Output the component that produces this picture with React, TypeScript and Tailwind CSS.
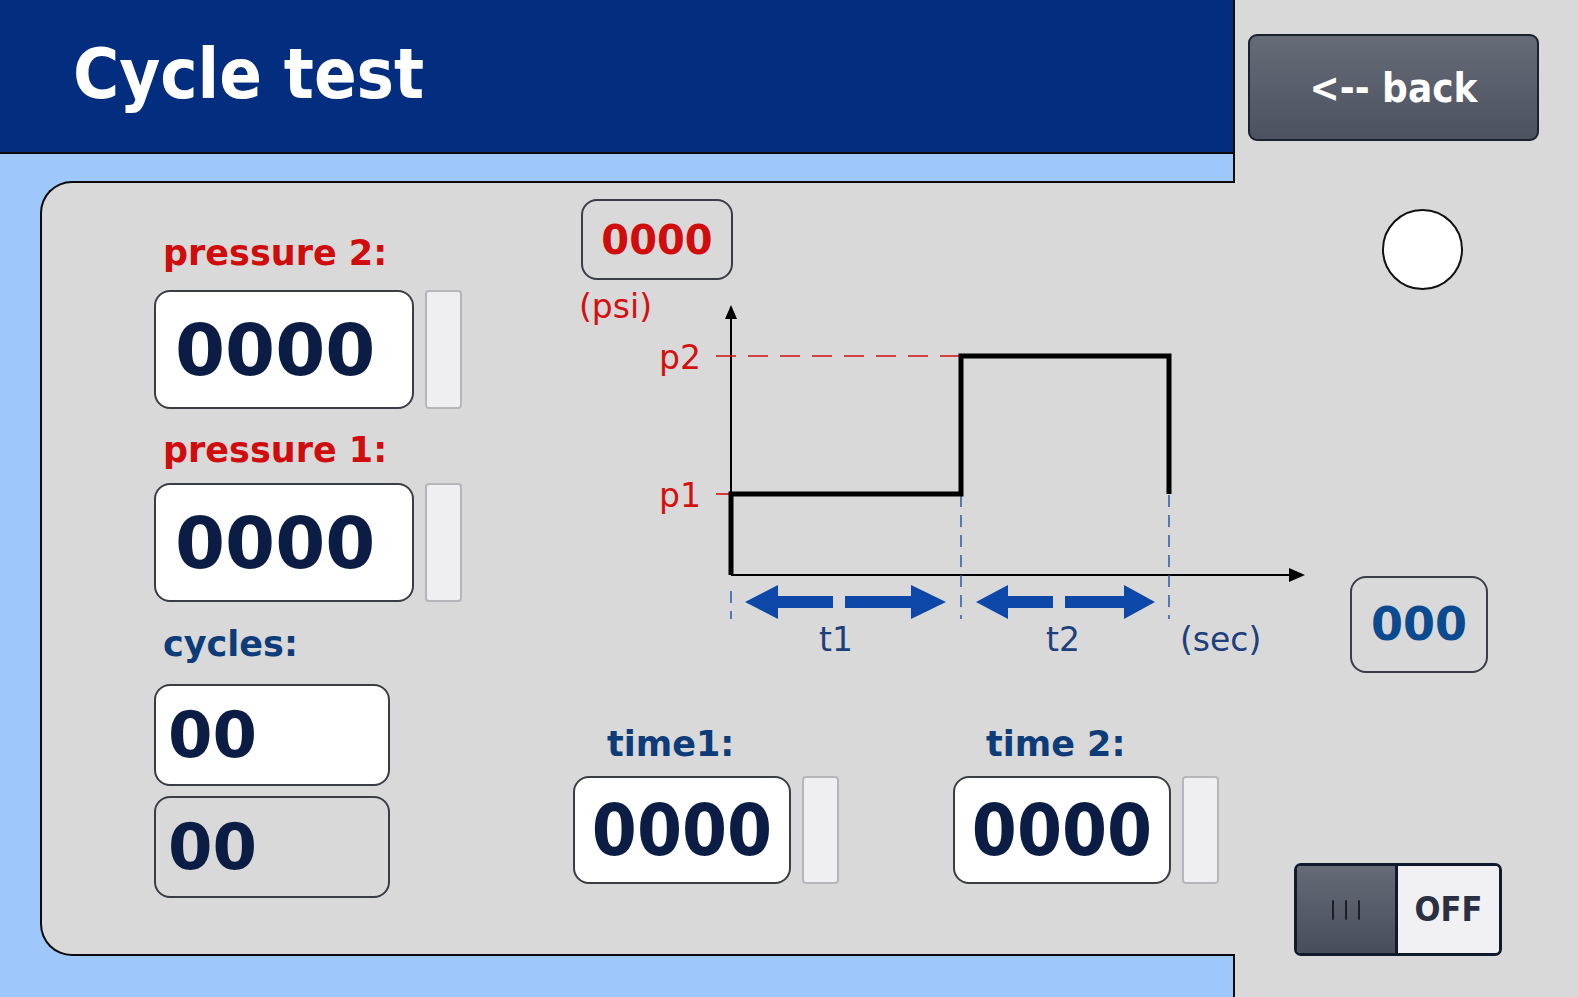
import React from "react";

const cond = "font-['DejaVu_Sans_Condensed','DejaVu_Sans',sans-serif]";
const wide = "font-['DejaVu_Sans',sans-serif]";

// white value box with the narrow slider strip beside it
const ValueBox = ({value, w, h, text}: {value: string; w: string; h: string; text: string}) => (
    <div className="flex gap-[11px]">
        <div className={`${w} ${h} ${text} bg-white border-2 border-[#3a3d44] rounded-[16px] flex items-center font-bold text-[#0b1d45] leading-none`}>
            {value}
        </div>
        <div className={`w-[37px] ${h} bg-[#efeff1] border-2 border-[#b4b6ba] rounded-[4px]`}/>
    </div>
);

const Label = ({children, color, className = ""}: {children: React.ReactNode; color: string; className?: string}) => (
    <p className={`${wide} ${color} ${className} text-[35px] font-bold leading-[40px]`}>{children}</p>
);

const Chart = () => (
    <svg width="740" height="380" className="overflow-visible" style={{fontFamily: "'DejaVu Sans',sans-serif"}}>
        <text x="6" y="33" fontSize="33" fill="#d41010">(psi)</text>

        {/* axes */}
        <line x1="158" y1="290" x2="158" y2="32" stroke="#000" strokeWidth="2"/>
        <polygon points="158,20 152,34 164,34" fill="#000"/>
        <line x1="158" y1="290" x2="718" y2="290" stroke="#000" strokeWidth="2"/>
        <polygon points="732,290 716,283 716,297" fill="#000"/>

        {/* pressure levels */}
        <line x1="143" y1="71" x2="388" y2="71" stroke="#d41010" strokeWidth="1.6" strokeDasharray="20 12"/>
        <line x1="143" y1="209" x2="158" y2="209" stroke="#d41010" strokeWidth="1.6"/>
        <text x="86" y="84" fontSize="33" fill="#d41010">p2</text>
        <text x="86" y="222" fontSize="33" fill="#d41010">p1</text>

        {/* time markers */}
        <g stroke="#1f4fa6" strokeWidth="1.4" strokeDasharray="12 8">
            <line x1="158" y1="306" x2="158" y2="334"/>
            <line x1="388" y1="210" x2="388" y2="334"/>
            <line x1="596" y1="210" x2="596" y2="334"/>
        </g>

        {/* cycle profile */}
        <polyline points="158,290 158,209 388,209 388,71 596,71 596,209" fill="none" stroke="#000" strokeWidth="5" strokeLinejoin="miter"/>

        {/* duration arrows */}
        <g fill="#0d48a8">
            <polygon points="172,317 205,300 205,334"/>
            <rect x="204" y="311" width="56" height="12"/>
            <rect x="272" y="311" width="67" height="12"/>
            <polygon points="373,317 338,300 338,334"/>
            <polygon points="403,317 435,300 435,334"/>
            <rect x="434" y="311" width="46" height="12"/>
            <rect x="492" y="311" width="60" height="12"/>
            <polygon points="582,317 551,300 551,334"/>
        </g>
        <text x="263" y="366" fontSize="33" fill="#1d3f7c" textAnchor="middle">t1</text>
        <text x="490" y="366" fontSize="33" fill="#1d3f7c" textAnchor="middle">t2</text>
        <text x="607" y="366" fontSize="33" fill="#1d3f7c">(sec)</text>
    </svg>
);

export default function App() {
    return (
        <div className={`${cond} w-[1578px] h-[997px] bg-[#d9d9d9] flex overflow-hidden`}>
            <div className="w-[1235px] shrink-0 flex flex-col">
                <div className="h-[154px] bg-[#032e7f] border-b-2 border-r-2 border-[#0a0a0a] pl-[73px] pt-[30px]">
                    <h1 className="text-white font-bold text-[70px] leading-[88px]">Cycle test</h1>
                </div>
                <div className="h-[27px] bg-[#9ec7fb] border-r-2 border-[#0a0a0a]"/>
                <div className="h-[775px] bg-[#9ec7fb] pl-[40px] flex">
                    <div className="flex-1 min-w-0 bg-[#d9d9d9] border-t-2 border-l-2 border-b-2 border-[#0a0a0a] rounded-l-[32px] flex pl-[112px]">
                        <div className="w-[310px] shrink-0 flex flex-col">
                            <Label color="text-[#d00c0c]" className="mt-[50px] ml-[9px]">pressure 2:</Label>
                            <div className="mt-[17px]">
                                <ValueBox value="0000" w="w-[260px]" h="h-[119px]" text={`${wide} text-[72px] pl-[19px]`}/>
                            </div>
                            <Label color="text-[#d00c0c]" className="mt-[21px] ml-[9px]">pressure 1:</Label>
                            <div className="mt-[13px]">
                                <ValueBox value="0000" w="w-[260px]" h="h-[119px]" text={`${wide} text-[72px] pl-[19px]`}/>
                            </div>
                            <Label color="text-[#0d3c78]" className="mt-[22px] ml-[9px]">cycles:</Label>
                            <div className={`${wide} mt-[20px] w-[236px] h-[102px] bg-white border-2 border-[#3a3d44] rounded-[16px] flex items-center pl-[12px] text-[64px] font-bold text-[#0b1d45] leading-none`}>00</div>
                            <div className={`${wide} mt-[10px] w-[236px] h-[102px] border-2 border-[#3a3d44] rounded-[16px] flex items-center pl-[12px] text-[64px] font-bold text-[#0b1d45] leading-none`}>00</div>
                        </div>
                        <div className="ml-[109px] w-[600px] shrink-0 flex flex-col">
                            <div className={`${wide} mt-[16px] ml-[8px] w-[152px] h-[81px] border-2 border-[#3a3d44] rounded-[16px] flex items-center justify-center text-[40px] font-bold text-[#d00c0c]`}>0000</div>
                            <div className="mt-[5px] h-[380px]">
                                <Chart/>
                            </div>
                            <div className="mt-[59px] flex gap-[114px]">
                                <div className="flex flex-col">
                                    <Label color="text-[#0d3c78]" className="ml-[34px]">time1:</Label>
                                    <div className="mt-[12px]">
                                        <ValueBox value="0000" w="w-[218px]" h="h-[108px]" text="text-[72px] justify-center"/>
                                    </div>
                                </div>
                                <div className="flex flex-col">
                                    <Label color="text-[#0d3c78]" className="ml-[33px]">time 2:</Label>
                                    <div className="mt-[12px]">
                                        <ValueBox value="0000" w="w-[218px]" h="h-[108px]" text="text-[72px] justify-center"/>
                                    </div>
                                </div>
                            </div>
                        </div>
                    </div>
                </div>
                <div className="flex-1 bg-[#9ec7fb] border-r-2 border-[#0a0a0a]"/>
            </div>

            <div className="flex-1 flex flex-col">
                <button className="mt-[34px] ml-[13px] w-[291px] h-[107px] rounded-[9px] border-2 border-[#1c2130] bg-gradient-to-b from-[#666b78] to-[#4d5260] text-white font-bold text-[40px]">
                    &lt;-- back
                </button>
                <div className="mt-[68px] ml-[147px] w-[81px] h-[81px] rounded-full bg-white border-2 border-[#111]"/>
                <div className={`${wide} mt-[286px] ml-[115px] w-[138px] h-[97px] border-2 border-[#3a3d44] rounded-[16px] flex items-center justify-center text-[46px] font-bold text-[#0b4a8f]`}>000</div>
                <div className="mt-[190px] ml-[59px] w-[208px] h-[93px] flex border-[3px] border-[#111a2c] rounded-[7px] overflow-hidden">
                    <div className="w-[101px] bg-gradient-to-b from-[#666b78] to-[#484d5b] border-r-[3px] border-[#111a2c] flex items-center justify-center gap-[11px]">
                        <span className="w-[2px] h-[20px] bg-[#1b1f2a] rounded"/>
                        <span className="w-[2px] h-[20px] bg-[#1b1f2a] rounded"/>
                        <span className="w-[2px] h-[20px] bg-[#1b1f2a] rounded"/>
                    </div>
                    <div className="flex-1 bg-[#f1f1f3] flex items-center justify-center text-[34px] font-bold text-[#2a3042]">OFF</div>
                </div>
            </div>
        </div>
    );
}
